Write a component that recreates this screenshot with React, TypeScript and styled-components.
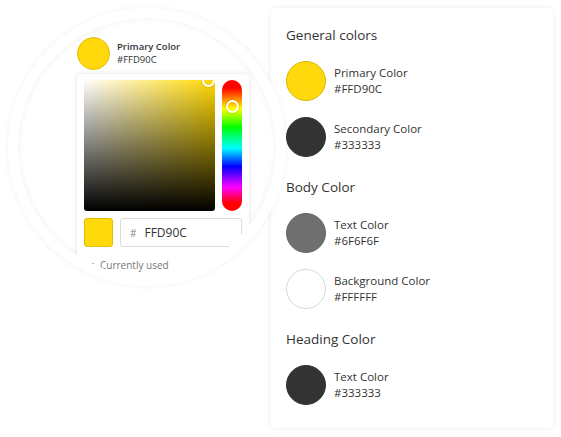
import React from 'react';
import styled, { createGlobalStyle } from 'styled-components';
import { ChevronDown } from 'lucide-react';

const GlobalStyle = createGlobalStyle`
  html, body {
    margin: 0;
    padding: 0;
    background: #ffffff;
  }

  body {
    font-family: 'Open Sans', 'Noto Sans', sans-serif;
    color: #333333;
  }

  * {
    box-sizing: border-box;
  }
`;

interface SwatchProps {
  $color: string;
  $border?: string;
  $size: number;
}

const Page = styled.div`
  display: flex;
  align-items: flex-start;
  padding: 8px 0 0 8px;
  width: 561px;
  height: 437px;
`;

const Magnifier = styled.div`
  position: relative;
  z-index: 1;
  flex: none;
  width: 278px;
  height: 278px;
  margin-right: -15px;
  border-radius: 50%;
  border: 10px solid #ffffff;
  background: #ffffff;
  overflow: hidden;
  box-shadow: 0 0 6px rgba(0, 0, 0, 0.06), inset 0 0 6px rgba(0, 0, 0, 0.07);
`;

const Lens = styled.div`
  padding: 19px 0 0 59px;
  width: 300px;
`;

const ZoomHeader = styled.div`
  display: flex;
  align-items: center;
  gap: 7px;
`;

const Swatch = styled.div<SwatchProps>`
  flex: none;
  width: ${p => p.$size}px;
  height: ${p => p.$size}px;
  border-radius: 50%;
  background: ${p => p.$color};
  border: 1px solid ${p => p.$border || p.$color};
`;

const ZoomText = styled.div`
  display: flex;
  flex-direction: column;
  font-size: 9.5px;
  line-height: 12.5px;
  color: #333333;

  strong {
    font-weight: 600;
  }
`;

const PickerCard = styled.div`
  margin-top: 4px;
  width: 172px;
  padding: 6px 7px 12px;
  background: #ffffff;
  border-radius: 4px;
  box-shadow: 0 0 5px rgba(0, 0, 0, 0.12);
`;

const PickerTop = styled.div`
  display: flex;
  gap: 7px;
`;

const Saturation = styled.div`
  position: relative;
  width: 131px;
  height: 131px;
  border-radius: 3px;
  overflow: hidden;
  background:
    linear-gradient(to bottom, rgba(0, 0, 0, 0), #000000),
    linear-gradient(to right, #ffffff, rgba(255, 255, 255, 0)),
    #ffd900;
`;

const Hue = styled.div`
  position: relative;
  width: 20px;
  height: 131px;
  border-radius: 10px;
  background: linear-gradient(
    to bottom,
    #ff0000 0%,
    #ff0000 6%,
    #ffff00 22%,
    #00ff00 36%,
    #00ffff 52%,
    #0000ff 66%,
    #ff00ff 82%,
    #ff0000 94%,
    #ff0000 100%
  );
`;

const Thumb = styled.div`
  position: absolute;
  width: 13px;
  height: 13px;
  margin: -6.5px 0 0 -6.5px;
  border-radius: 50%;
  border: 2.5px solid #ffffff;
  box-shadow: 0 0 2px rgba(0, 0, 0, 0.3);
`;

const PickerBottom = styled.div`
  display: flex;
  gap: 7px;
  margin-top: 7px;
`;

const SquareSwatch = styled.div`
  width: 29px;
  height: 29px;
  border-radius: 3px;
  background: #ffd90c;
  border: 1px solid #e2bd00;
`;

const HexInput = styled.div`
  display: flex;
  align-items: center;
  width: 122px;
  height: 29px;
  padding-left: 9px;
  border: 1px solid #dcdcdc;
  border-radius: 3px;
  font-size: 12px;
  color: #333333;

  span {
    color: #888888;
    font-size: 10px;
    margin-right: 8px;
  }
`;

const UsedRow = styled.div`
  display: flex;
  align-items: center;
  gap: 4px;
  margin-top: 11px;
  font-size: 10px;
  color: #777777;

  svg {
    color: #333333;
  }
`;

const Panel = styled.div`
  flex: none;
  width: 282px;
  height: 420px;
  padding: 17px 15px 0;
  background: #ffffff;
  border-radius: 4px;
  box-shadow: 0 0 6px rgba(0, 0, 0, 0.08);
`;

const Section = styled.div`
  & + & {
    margin-top: 20px;
  }
`;

const Heading = styled.div`
  font-size: 13.5px;
  line-height: 20px;
  color: #333333;
  margin-bottom: 16px;
`;

const List = styled.div`
  display: flex;
  flex-direction: column;
  gap: 16px;
`;

const Row = styled.div`
  display: flex;
  align-items: center;
  gap: 8px;
`;

const Info = styled.div`
  display: flex;
  flex-direction: column;
  font-size: 11.5px;
  line-height: 16px;
  color: #333333;
`;

interface ColorItem {
  label: string;
  hex: string;
  border?: string;
}

const sections: { title: string; items: ColorItem[] }[] = [
  {
    title: 'General colors',
    items: [
      { label: 'Primary Color', hex: '#FFD90C', border: '#dcb800' },
      { label: 'Secondary Color', hex: '#333333' }
    ]
  },
  {
    title: 'Body Color',
    items: [
      { label: 'Text Color', hex: '#6F6F6F', border: '#666666' },
      { label: 'Background Color', hex: '#FFFFFF', border: '#d6d6d6' }
    ]
  },
  {
    title: 'Heading Color',
    items: [{ label: 'Text Color', hex: '#333333' }]
  }
];

function ColorPicker (): React.ReactElement {
  return (
    <Magnifier>
      <Lens>
        <ZoomHeader>
          <Swatch $border={'#e0bc00'} $color={'#FFD90C'} $size={33} />
          <ZoomText>
            <strong>Primary Color</strong>
            <span>#FFD90C</span>
          </ZoomText>
        </ZoomHeader>
        <PickerCard>
          <PickerTop>
            <Saturation>
              <Thumb style={{ left: '95%', top: 0 }} />
            </Saturation>
            <Hue>
              <Thumb style={{ left: '50%', top: 26 }} />
            </Hue>
          </PickerTop>
          <PickerBottom>
            <SquareSwatch />
            <HexInput>
              <span>#</span>FFD90C
            </HexInput>
          </PickerBottom>
          <UsedRow>
            <ChevronDown size={12} strokeWidth={2} />
            Currently used
          </UsedRow>
        </PickerCard>
      </Lens>
    </Magnifier>
  );
}

export default function App (): React.ReactElement {
  return (
    <>
      <GlobalStyle />
      <Page>
        <ColorPicker />
        <Panel>
          {sections.map((section) => (
            <Section key={section.title}>
              <Heading>{section.title}</Heading>
              <List>
                {section.items.map((item, index) => (
                  <Row key={index}>
                    <Swatch $border={item.border} $color={item.hex} $size={40} />
                    <Info>
                      <span>{item.label}</span>
                      <span>{item.hex}</span>
                    </Info>
                  </Row>
                ))}
              </List>
            </Section>
          ))}
        </Panel>
      </Page>
    </>
  );
}
